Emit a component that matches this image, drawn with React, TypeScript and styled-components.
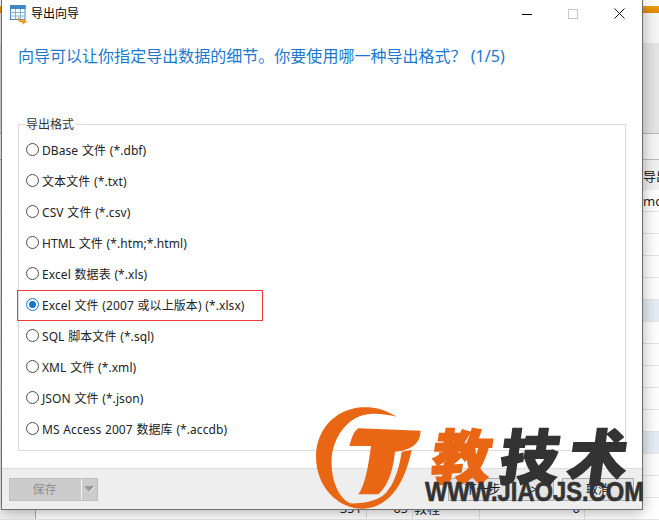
import React from "react";
import styled, { createGlobalStyle } from "styled-components";

const Global = createGlobalStyle`
  html, body { margin: 0; padding: 0; background: #fff; }
  #root { width: 659px; height: 520px; }
`;
const UI = `"Noto Sans", "Noto Sans CJK SC", sans-serif`;

const Desktop = styled.div`
  position: relative;
  width: 659px;
  height: 520px;
  overflow: hidden;
  font-family: ${UI};
  background: #fff;
`;
const Backdrop = styled.div`
  display: flex;
  flex-direction: column;
  height: 100%;
`;
const TopGap = styled.div`flex: 0 0 6px; background: #fff;`;
const OrangeBar = styled.div`flex: 0 0 7px; background: linear-gradient(#f0a010, #e08400);`;
const ToolStrip = styled.div`flex: 0 0 30px; background: #f6f6f6;`;
const RibbonShade = styled.div`
  flex: 0 0 91px;
  box-sizing: border-box;
  background: #e4e4e4;
  border-bottom: 1px solid #b9b9b9;
`;
const FilterStrip = styled.div`
  flex: 0 0 26px;
  box-sizing: border-box;
  background: #f5f5f5;
  border-bottom: 1px solid #b9b9b9;
`;
const DataRow = styled.div<{ $tone?: "blue" | "plain" }>`
  flex: 0 0 22px;
  min-height: 0;
  overflow: hidden;
  display: grid;
  grid-template-columns: 36px 331px 46px 67px 105px 57px 1fr;
  box-sizing: border-box;
  border-bottom: 1px solid #e6e6e6;
  font-size: 13px;
  line-height: 21px;
  color: #222;
  background: ${(p) => (p.$tone === "blue" ? "#e6ecf5" : "#fff")};
`;
const HeadRow = styled(DataRow)`
  flex: 0 0 30px;
  background: #f0f0f0;
  border-bottom: none;
`;
const Cell = styled.div<{ $right?: boolean; $line?: boolean }>`
  padding: 0 4px 0 1px;
  text-align: ${(p) => (p.$right ? "right" : "left")};
  border-right: ${(p) => (p.$line ? "1px solid #e2e2e2" : "none")};
  white-space: nowrap;
  overflow: hidden;
`;
const HeadCell = styled(Cell)`
  padding-top: 6px;
`;
const LowCell = styled(Cell)`
  padding-top: 1px;
`;
const Gutter = styled(Cell)`
  background: #f3f3f3;
  border-right: 1px solid #a8a8a8;
`;

const Window = styled.div`
  position: absolute;
  left: 1px;
  top: 0;
  width: 642px;
  height: 510px;
  box-sizing: border-box;
  display: flex;
  flex-direction: column;
  background: #fff;
  border: 1px solid #6e6e6e;
  border-top: none;
  box-shadow: 0 2px 14px rgba(0, 0, 0, 0.32);
`;
const TitleBar = styled.div`
  flex: 0 0 29px;
  display: flex;
  align-items: center;
  padding-left: 8px;
  gap: 3px;
  font-size: 12px;
  color: #000;
`;
const TitleText = styled.span`
  flex: 1;
  line-height: 16px;
  margin-top: -2px;
`;
const WinControls = styled.div`
  display: flex;
  align-items: center;
  margin-top: -2px;
`;
const WinButton = styled.div`
  width: 46px;
  height: 26px;
  display: flex;
  align-items: center;
  justify-content: center;
`;
const Heading = styled.h1`
  margin: 15px 0 0 16px;
  height: 24px;
  font-size: 16px;
  line-height: 24px;
  font-weight: 400;
  color: #1a78d2;
  white-space: nowrap;
  letter-spacing: 0.02px;
`;
const Group = styled.fieldset`
  margin: 48px 16px 0 16px;
  padding: 0 0 0 7px;
  flex: 0 0 335px;
  box-sizing: border-box;
  border: 1px solid #dcdcdc;
  display: flex;
  flex-direction: column;
  min-width: 0;
`;
const GroupLegend = styled.legend`
  padding: 2px 1px 0 0;
  font-size: 12px;
  line-height: 14px;
  color: #333;
`;
const RadioList = styled.div`
  display: flex;
  flex-direction: column;
  margin-top: 2px;
`;
const RadioRow = styled.div`
  position: relative;
  height: 31px;
  display: flex;
  align-items: center;
  gap: 3px;
  font-size: 12px;
  color: #222;
  white-space: pre;
  letter-spacing: 0.08px;
  word-spacing: 0.5px;
`;
const RadioDot = styled.span<{ $on?: boolean }>`
  position: relative;
  flex: 0 0 13px;
  width: 13px;
  height: 13px;
  box-sizing: border-box;
  border-radius: 50%;
  border: 1px solid ${(p) => (p.$on ? "#1976c4" : "#4c4c4c")};
  background: #fff;
  &::after {
    content: "";
    display: ${(p) => (p.$on ? "block" : "none")};
    position: absolute;
    left: 2px;
    top: 2px;
    width: 7px;
    height: 7px;
    border-radius: 50%;
    background: #1976c4;
  }
`;
const RedFrame = styled.div`
  position: absolute;
  left: -9px;
  top: 1px;
  width: 246px;
  height: 31px;
  box-sizing: border-box;
  border: 1px solid #f03a3a;
`;
const Footer = styled.div`
  flex: 1;
  margin-top: 17px;
  display: flex;
  align-items: center;
  gap: 8px;
  padding: 0 8px 0 7px;
  background: #eeeeee;
  border-top: 1px solid #dcdcdc;
`;
const SaveSplit = styled.div`
  display: flex;
  align-items: stretch;
  width: 89px;
  height: 23px;
  box-sizing: border-box;
  background: #cccccc;
  border: 1px solid #bfbfbf;
  margin-right: auto;
`;
const SaveLabel = styled.span`
  flex: 1;
  text-align: center;
  font-size: 12px;
  line-height: 21px;
  color: #8f8f8f;
  padding-right: 2px;
`;
const SaveCaret = styled.span`
  flex: 0 0 15px;
  border-left: 1px solid #f2f2f2;
  display: flex;
  align-items: center;
  justify-content: center;
`;
const WizardButton = styled.div<{ $width: number }>`
  width: ${(p) => p.$width}px;
  height: 23px;
  box-sizing: border-box;
  border: 1px solid #adadad;
  background: #e4e4e4;
  display: flex;
  align-items: center;
  justify-content: center;
  gap: 30px;
  font-size: 12px;
  color: #111;
`;

const Watermark = styled.div`
  position: absolute;
  left: 300px;
  top: 400px;
  width: 359px;
  height: 120px;
  pointer-events: none;
`;
const LogoMark = styled.svg`
  position: absolute;
  left: 0;
  top: 0;
`;
const BrandName = styled.div`
  position: absolute;
  left: 133px;
  top: 12px;
  display: flex;
  gap: 9px;
  font-family: "Noto Sans CJK SC", sans-serif;
  font-weight: 900;
  font-size: 59px;
  line-height: 84px;
  color: #333;
  -webkit-text-stroke: 1.6px currentColor;
  transform: skewX(-8deg);
`;
const BrandAccent = styled.span`color: #e96614;`;
const BrandUrl = styled.div`
  position: absolute;
  left: 125px;
  top: 79px;
  font-family: "Liberation Sans", sans-serif;
  font-weight: 700;
  font-size: 27px;
  line-height: 26px;
  color: #333;
  white-space: nowrap;
  transform-origin: left center;
  transform: scaleX(0.88);
  -webkit-text-stroke: 0.6px #333;
`;

const items = [
  "DBase 文件 (*.dbf)",
  "文本文件 (*.txt)",
  "CSV 文件 (*.csv)",
  "HTML 文件 (*.htm;*.html)",
  "Excel 数据表 (*.xls)",
  "Excel 文件 (2007 或以上版本) (*.xlsx)",
  "SQL 脚本文件 (*.sql)",
  "XML 文件 (*.xml)",
  "JSON 文件 (*.json)",
  "MS Access 2007 数据库 (*.accdb)",
];

const blankRows = Array.from({ length: 13 }, (_, i) => i);

function EmptyRow({ blue }: { blue?: boolean }) {
  return (
    <DataRow $tone={blue ? "blue" : "plain"}>
      <Gutter />
    </DataRow>
  );
}

function WizardIcon() {
  return (
    <svg width="18" height="20" viewBox="0 0 18 20">
      <rect x="0.5" y="0.5" width="14.5" height="14" fill="#fff" stroke="#3f86c6" />
      <rect x="0" y="0" width="15.5" height="4" fill="#3f86c6" />
      <path d="M5.5 4v10.5M10.5 4v10.5M0.5 7.5h14.5M0.5 11h14.5" stroke="#7fb0dc" strokeWidth="1" fill="none" />
      <path d="M8.5 12.5c0 3 2 4.2 5 4.2" stroke="#f09a1a" strokeWidth="2" fill="none" />
      <path d="M12.5 13.2l4.5 3.4-4.5 3.2z" fill="#f09a1a" />
    </svg>
  );
}

export default function App() {
  return (
    <Desktop>
      <Global />
      <Backdrop>
        <TopGap />
        <OrangeBar />
        <ToolStrip />
        <RibbonShade />
        <FilterStrip />
        <HeadRow>
          <Gutter />
          <Cell />
          <Cell />
          <Cell />
          <Cell />
          <Cell />
          <HeadCell>导出</HeadCell>
        </HeadRow>
        <DataRow>
          <Gutter />
          <Cell />
          <Cell />
          <Cell />
          <Cell />
          <Cell />
          <LowCell>mc</LowCell>
        </DataRow>
        {blankRows.map((i) => (
          <EmptyRow key={i} blue={i === 4 || i === 10} />
        ))}
        <DataRow>
          <Gutter />
          <Cell $right $line>351</Cell>
          <Cell $right $line>65</Cell>
          <Cell $line>教程</Cell>
          <Cell $right $line>0</Cell>
          <Cell />
          <Cell />
        </DataRow>
      </Backdrop>

      <Window>
        <TitleBar>
          <WizardIcon />
          <TitleText>导出向导</TitleText>
          <WinControls>
            <WinButton>
              <svg width="10" height="10" viewBox="0 0 10 10">
                <path d="M0 5.5h10" stroke="#000" strokeWidth="1" />
              </svg>
            </WinButton>
            <WinButton>
              <svg width="10" height="10" viewBox="0 0 10 10">
                <rect x="0.5" y="0.5" width="9" height="9" fill="none" stroke="#c8c8c8" />
              </svg>
            </WinButton>
            <WinButton>
              <svg width="11" height="11" viewBox="0 0 11 11">
                <path d="M0.5 0.5l10 10M10.5 0.5l-10 10" stroke="#111" strokeWidth="1" />
              </svg>
            </WinButton>
          </WinControls>
        </TitleBar>
        <Heading>向导可以让你指定导出数据的细节。你要使用哪一种导出格式？ (1/5)</Heading>
        <Group>
          <GroupLegend>导出格式</GroupLegend>
          <RadioList>
            {items.map((t, i) => (
              <RadioRow key={t}>
                <RadioDot $on={i === 5} />
                {t}
                {i === 5 && <RedFrame />}
              </RadioRow>
            ))}
          </RadioList>
        </Group>
        <Footer>
          <SaveSplit>
            <SaveLabel>保存</SaveLabel>
            <SaveCaret>
              <svg width="11" height="6" viewBox="0 0 11 6">
                <path d="M0 0h11L5.5 6z" fill="#9a9a9a" />
                <path d="M11 0L5.5 6" stroke="#fff" strokeWidth="1" />
              </svg>
            </SaveCaret>
          </SaveSplit>
          <WizardButton $width={106}>
            <span>下一步</span>
            <span>&gt;</span>
          </WizardButton>
          <WizardButton $width={72}>取消</WizardButton>
        </Footer>
      </Window>

      <Watermark>
        <LogoMark width="130" height="120" viewBox="0 0 390 360">
          <path
            fill="#e96614"
            d="M290 50C250 25 215 20 185 22C100 28 48 95 48 170C48 260 115 328 190 326C255 324 310 270 335 150L305 155C295 225 270 280 235 295C210 308 170 312 150 310C110 290 92 230 95 175C100 105 150 45 210 42C240 40 265 45 290 50Z"
          />
          <path
            fill="#e96614"
            d="M175 85L362 92C360 125 345 148 285 155C280 200 270 250 235 283L175 283C195 255 205 200 213 138L148 138C155 115 160 95 175 85Z"
          />
        </LogoMark>
        <BrandName>
          <BrandAccent>教</BrandAccent>
          <span>技</span>
          <span>术</span>
        </BrandName>
        <BrandUrl>WWW.JIAOJS.COM</BrandUrl>
      </Watermark>
    </Desktop>
  );
}
